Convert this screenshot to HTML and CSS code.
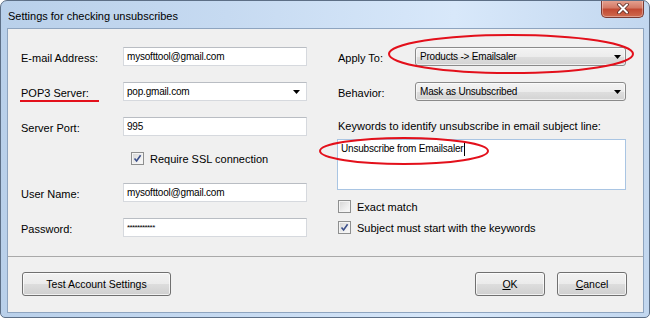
FILE: index.html
```html
<!DOCTYPE html>
<html lang="en">
<head>
    <meta charset="UTF-8">
    <title>Settings for checking unsubscribes</title>
    <link rel="stylesheet" href="styles.css">
</head>
<body>
    <div class="window">
        <div class="titlebar">
            <span class="title">Settings for checking unsubscribes</span>
            <div class="close">
                <svg width="12" height="11" viewBox="0 0 12 11">
                    <path d="M2 1.5 L10 9.5 M10 1.5 L2 9.5" stroke="#5a2a24" stroke-width="3.6" stroke-linecap="round"/>
                    <path d="M2 1.5 L10 9.5 M10 1.5 L2 9.5" stroke="#ffffff" stroke-width="2" stroke-linecap="round"/>
                </svg>
            </div>
        </div>

        <div class="client">
            <div class="panel">
                <div class="col left">
                    <div class="row">
                        <label class="lbl">E-mail Address:</label>
                        <input class="field" type="text" value="mysofttool@gmail.com">
                    </div>
                    <div class="row">
                        <label class="lbl"><span class="underline">POP3 Server:</span></label>
                        <div class="field combo-edit">
                            <span class="val">pop.gmail.com</span>
                            <svg class="arrow" width="7" height="4" viewBox="0 0 7 4"><polygon points="0,0 7,0 3.5,4" fill="#000"/></svg>
                        </div>
                    </div>
                    <div class="row">
                        <label class="lbl">Server Port:</label>
                        <input class="field" type="text" value="995">
                    </div>
                    <div class="row check-row indent">
                        <span class="box">
                            <svg width="11" height="11" viewBox="0 0 11 11"><path d="M2.5 5.5 L4.6 8 L8.6 2.2" stroke="#3b4f8a" stroke-width="1.6" fill="none"/></svg>
                        </span>
                        <span class="check-text">Require SSL connection</span>
                    </div>
                    <div class="row">
                        <label class="lbl">User Name:</label>
                        <input class="field" type="text" value="mysofttool@gmail.com">
                    </div>
                    <div class="row">
                        <label class="lbl">Password:</label>
                        <input class="field pass" type="text" value="***********">
                    </div>
                </div>

                <div class="col right">
                    <div class="row">
                        <label class="lbl short">Apply To:</label>
                        <div class="combo">
                            <span class="val">Products -&gt; Emailsaler</span>
                            <svg class="arrow" width="7" height="4" viewBox="0 0 7 4"><polygon points="0,0 7,0 3.5,4" fill="#000"/></svg>
                        </div>
                    </div>
                    <div class="row">
                        <label class="lbl short">Behavior:</label>
                        <div class="combo">
                            <span class="val">Mask as Unsubscribed</span>
                            <svg class="arrow" width="7" height="4" viewBox="0 0 7 4"><polygon points="0,0 7,0 3.5,4" fill="#000"/></svg>
                        </div>
                    </div>
                    <div class="kw-label">Keywords to identify unsubscribe in email subject line:</div>
                    <div class="memo"><span class="val">Unsubscribe from Emailsaler</span><span class="caret"></span></div>
                    <div class="row check-row first">
                        <span class="box"></span>
                        <span class="check-text">Exact match</span>
                    </div>
                    <div class="row check-row">
                        <span class="box">
                            <svg width="11" height="11" viewBox="0 0 11 11"><path d="M2.5 5.5 L4.6 8 L8.6 2.2" stroke="#3b4f8a" stroke-width="1.6" fill="none"/></svg>
                        </span>
                        <span class="check-text">Subject must start with the keywords</span>
                    </div>
                </div>
            </div>

            <div class="footer">
                <button class="btn wide">Test Account Settings</button>
                <div class="spacer"></div>
                <button class="btn"><u>O</u>K</button>
                <button class="btn"><u>C</u>ancel</button>
            </div>
        </div>

        <!-- red annotation marks drawn over the dialog -->
        <svg class="marks" width="650" height="318" viewBox="0 0 650 318">
            <ellipse cx="511" cy="54" rx="122" ry="19" fill="none" stroke="#e3101b" stroke-width="2"/>
            <ellipse cx="404" cy="151" rx="84" ry="13" fill="none" stroke="#e3101b" stroke-width="2"/>
        </svg>
    </div>
</body>
</html>
```

FILE: styles.css
```css
body {
    margin: 0;
    font-family: "Liberation Sans", Arial, sans-serif;
    font-size: 11px;
    color: #000;
    background: #ffffff;
}

.window {
    position: relative;
    width: 650px;
    height: 318px;
    box-sizing: border-box;
    border: 1px solid #5d6f86;
    border-radius: 7px 7px 5px 5px;
    background: linear-gradient(to right, #b9d0ea 0%, #c6daf1 35%, #d8e8fa 70%, #c2d7ef 100%);
    display: flex;
    flex-direction: column;
    overflow: hidden;
}

.titlebar {
    height: 27px;
    display: flex;
    align-items: center;
    padding-left: 7px;
}

.title {
    font-size: 11px;
    margin-top: 2px;
}

.close {
    margin-left: auto;
    margin-right: 5px;
    align-self: flex-start;
    width: 43px;
    height: 18px;
    box-sizing: border-box;
    margin-top: -1px;
    border: 1px solid #7a3a33;
    border-top: none;
    border-radius: 0 0 5px 5px;
    background: linear-gradient(#e7a594 0%, #d47a66 45%, #c24a33 55%, #cf6a4f 100%);
    display: flex;
    align-items: center;
    justify-content: center;
    box-shadow: inset 0 0 0 1px rgba(255, 255, 255, 0.35);
}

.client {
    flex: 1;
    margin: 0 5px 4px 6px;
    border: 1px solid #8ea4bf;
    background: #f0f0f0;
    display: flex;
    flex-direction: column;
}

.panel {
    height: 228px;
    box-sizing: border-box;
    border-bottom: 1px solid #a9a9a9;
    padding: 18px 0 0 13px;
    display: flex;
    gap: 30px;
}

.col {
    display: flex;
    flex-direction: column;
}

.col.left {
    width: 286px;
}

.col.right {
    width: 289px;
}

.row {
    display: flex;
    align-items: center;
    height: 19px;
    margin-bottom: 16px;
}

.lbl {
    width: 102px;
    flex: none;
    padding-top: 2px;
}

.lbl.short {
    width: 77px;
    padding-left: 1px;
}

.underline {
    display: inline-block;
    border-bottom: 2px solid #e3101b;
    padding: 0 10px 1px 0;
    margin-left: -1px;
    padding-left: 1px;
    margin-top: 3px;
}

.field {
    width: 184px;
    height: 19px;
    box-sizing: border-box;
    border: 1px solid #d6d9de;
    border-top-color: #b9bdc3;
    background: #ffffff;
    padding: 0 3px;
    margin: 0;
    font-family: "Liberation Sans", Arial, sans-serif;
    font-size: 10px;
    letter-spacing: -0.2px;
    color: #000;
    outline: none;
}

.pass {
    font-size: 8px;
    letter-spacing: -0.6px;
}

.combo-edit {
    display: flex;
    align-items: center;
}

.val {
    font-size: 10px;
    letter-spacing: -0.2px;
}

.arrow {
    margin-left: auto;
    margin-right: 3px;
}

.combo {
    width: 211px;
    height: 19px;
    box-sizing: border-box;
    border: 1px solid #8a8a8a;
    border-radius: 3px;
    background: linear-gradient(#f3f3f3 0%, #ececec 50%, #dedede 51%, #d3d3d3 100%);
    box-shadow: inset 0 0 0 1px rgba(255, 255, 255, 0.6);
    display: flex;
    align-items: center;
    padding-left: 4px;
}

.combo .arrow {
    margin-right: 4px;
}

.check-row {
    height: 13px;
    margin-bottom: 18px;
}

.indent {
    padding-left: 110px;
}

.box {
    width: 13px;
    height: 13px;
    box-sizing: border-box;
    border: 1px solid #8e8f8f;
    background: linear-gradient(135deg, #d4d4d4 0%, #eeeeee 60%, #fbfbfb 100%);
    box-shadow: inset 0 0 0 1px #f4f4f4;
    display: flex;
    align-items: center;
    justify-content: center;
    flex: none;
}

.check-text {
    margin-left: 6px;
    padding-top: 1px;
}

.kw-label {
    margin-top: 3px;
    line-height: 13px;
    margin-bottom: 6px;
    padding-left: 1px;
}

.memo {
    width: 289px;
    height: 51px;
    box-sizing: border-box;
    margin-left: 0;
    border: 1px solid #a9c5e3;
    background: #ffffff;
    padding: 3px 3px;
    display: flex;
    align-items: flex-start;
}

.caret {
    display: inline-block;
    width: 1px;
    height: 13px;
    background: #000;
    margin-left: 1px;
}

.right .check-row {
    margin-bottom: 8px;
    padding-left: 1px;
}

.right .check-row.first {
    margin-top: 10px;
}

.footer {
    flex: 1;
    display: flex;
    align-items: flex-start;
    padding: 15px 16px 0 14px;
    gap: 12px;
}

.spacer {
    flex: 1;
}

.btn {
    width: 70px;
    height: 24px;
    box-sizing: border-box;
    border: 1px solid #707070;
    border-radius: 3px;
    background: linear-gradient(#f2f2f2 0%, #ebebeb 50%, #dddddd 51%, #cfcfcf 100%);
    box-shadow: inset 0 0 0 1px rgba(255, 255, 255, 0.7);
    font-family: "Liberation Sans", Arial, sans-serif;
    font-size: 10.5px;
    color: #000;
    padding: 0;
    margin: 0;
}

.btn.wide {
    width: 149px;
}

.marks {
    position: absolute;
    top: -1px;
    left: -1px;
    pointer-events: none;
}
```
